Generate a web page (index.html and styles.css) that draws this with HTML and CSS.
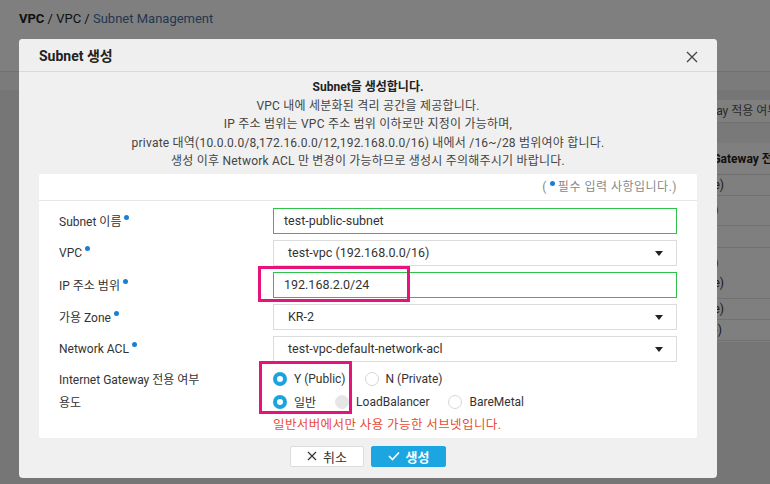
FILE: index.html
```html
<!DOCTYPE html>
<html lang="ko">
<head>
<meta charset="utf-8">
<title>Subnet 생성</title>
<link rel="stylesheet" href="styles.css">
</head>
<body>
<div class="page">
  <header class="topbar">
    <nav class="crumbs"><b>VPC</b> / VPC / <span class="cur">Subnet Management</span></nav>
  </header>
  <div class="tabband"></div>
  <main class="content">
    <div class="panel">
      <div class="filter"><span>Internet Gateway 적용 여부</span></div>
      <div class="band"></div>
      <div class="tbl">
        <div class="th">Internet Gateway 전용 여부</div>
        <div class="td r1">N (Private)</div>
        <div class="td r2">Y (Public)</div>
        <div class="td r3">-</div>
        <div class="td r4"><span>Y (Public)</span><span>N (Private)</span></div>
        <div class="td r5">N (Private)</div>
        <div class="td r6">Y (Public-)</div>
      </div>
    </div>
  </main>
</div>
<div class="overlay"></div>
<div class="modal">
  <div class="modal-head">
    <h1 class="modal-title">Subnet 생성</h1>
    <svg class="close" width="12" height="12" viewBox="0 0 12 12"><path d="M1 1L11 11M11 1L1 11" stroke="#444" stroke-width="1.3" fill="none"/></svg>
  </div>
  <div class="modal-body">
    <div class="desc">
      <p class="strong">Subnet을 생성합니다.</p>
      <p>VPC 내에 세분화된 격리 공간을 제공합니다.</p>
      <p>IP 주소 범위는 VPC 주소 범위 이하로만 지정이 가능하며,</p>
      <p>private 대역(10.0.0.0/8,172.16.0.0/12,192.168.0.0/16) 내에서 /16~/28 범위여야 합니다.</p>
      <p>생성 이후 Network ACL 만 변경이 가능하므로 생성시 주의해주시기 바랍니다.</p>
    </div>
    <div class="card">
      <div class="card-head">(<i class="req"></i>필수 입력 사항입니다.)</div>
      <div class="form">
        <div class="row">
          <div class="label">Subnet 이름<i class="req sup"></i></div>
          <div class="input ok">test-public-subnet</div>
        </div>
        <div class="row">
          <div class="label">VPC<i class="req sup"></i></div>
          <div class="select">test-vpc (192.168.0.0/16)<span class="caret"></span></div>
        </div>
        <div class="row">
          <div class="label">IP 주소 범위<i class="req sup"></i></div>
          <div class="input ok">192.168.2.0/24</div>
        </div>
        <div class="row">
          <div class="label">가용 Zone<i class="req sup"></i></div>
          <div class="select">KR-2<span class="caret"></span></div>
        </div>
        <div class="row">
          <div class="label">Network ACL<i class="req sup"></i></div>
          <div class="select">test-vpc-default-network-acl<span class="caret"></span></div>
        </div>
        <div class="row radio-row">
          <div class="label">Internet Gateway 전용 여부</div>
          <div class="radios">
            <span class="opt"><i class="radio on"></i>Y (Public)</span>
            <span class="opt"><i class="radio"></i>N (Private)</span>
          </div>
        </div>
        <div class="row radio-row">
          <div class="label">용도</div>
          <div class="radios">
            <span class="opt"><i class="radio on"></i>일반</span>
            <span class="opt"><i class="radio disabled"></i>LoadBalancer</span>
            <span class="opt"><i class="radio"></i>BareMetal</span>
          </div>
        </div>
        <div class="row msg-row">
          <div></div>
          <div class="msg">일반서버에서만 사용 가능한 서브넷입니다.</div>
        </div>
      </div>
    </div>
    <div class="actions">
      <button class="btn cancel"><svg width="10" height="10" viewBox="0 0 10 10"><path d="M1 1L9 9M9 1L1 9" stroke="#333" stroke-width="1.2" fill="none"/></svg>취소</button>
      <button class="btn submit"><svg width="12" height="10" viewBox="0 0 12 10"><path d="M1 5L4.5 8.5L11 1.5" stroke="#fff" stroke-width="1.6" fill="none"/></svg>생성</button>
    </div>
  </div>
  <div class="mark mark-ip"></div>
  <div class="mark mark-radio"></div>
</div>
</body>
</html>
```

FILE: styles.css
```css
* { box-sizing: border-box; }
html, body { margin: 0; padding: 0; }
body {
  width: 770px;
  height: 484px;
  overflow: hidden;
  position: relative;
  font-family: Roboto, "Noto Sans CJK KR", sans-serif;
  font-size: 12px;
  color: #333;
  background: #eeeeee;
}
p { margin: 0; }

/* background page */
.page { width: 770px; height: 484px; display: flex; flex-direction: column; }
.topbar { height: 72px; background: #fff; padding: 11px 19px 0; border-bottom: 1px solid #e3e3e3; }
.crumbs { font-size: 13px; line-height: 16px; color: #222; }
.crumbs .cur { color: #46709f; }
.tabband { height: 18px; background: #f6f6f6; }
.content { flex: 1; background: #ececec; padding: 10px 0 0 30px; }
.panel { background: #fff; height: 242px; overflow: hidden; }
.filter { height: 23px; line-height: 23px; padding-left: 608px; color: #555; white-space: nowrap; border-bottom: 1px solid #e2e2e2; }
.band { height: 20px; background: #f3f3f3; }
.tbl { padding-left: 637px; white-space: nowrap; }
.th { height: 32px; line-height: 32px; font-weight: bold; color: #222; border-bottom: 1px solid #ddd; }
.td { line-height: 20px; border-bottom: 1px solid #e2e2e2; color: #333; }
.r2 { line-height: 29px; }
.r3 { line-height: 21px; }
.r4 { display: flex; flex-direction: column; padding: 5px 0; }
.r4 span { line-height: 20px; }

.overlay { position: absolute; inset: 0; background: rgba(0,0,0,0.5); }

/* modal */
.modal {
  position: absolute;
  left: 19px; top: 39px;
  width: 698px; height: 439px;
  background: #f0f0f0;
  border-radius: 4px;
}
.modal-head {
  height: 33px;
  display: flex; align-items: center; justify-content: space-between;
  padding: 0 19px 0 20px;
  border-bottom: 1px solid #dadada;
  background: #efefef;
  border-radius: 4px 4px 0 0;
}
.modal-title { margin: 0; font-size: 14px; font-weight: bold; color: #222; }
.close { margin-top: 3px; }
.modal-body { padding: 6px 20px 0; }
.desc { text-align: center; line-height: 18.6px; color: #444; font-size: 12px; letter-spacing: 0.22px; }
.desc .strong { font-weight: bold; color: #222; letter-spacing: 0; }

.card { margin-top: 3px; background: #fff; height: 264px; border-radius: 2px; }
.card-head {
  height: 27px; line-height: 26px;
  text-align: right; padding-right: 20px;
  color: #888; border-bottom: 1px solid #e6e6e6;
  letter-spacing: 0.5px;
}
.req { display: inline-block; width: 5px; height: 5px; border-radius: 50%; background: #1b7fd0; margin: 0 3px 0 3px; vertical-align: 5px; }
.req.sup { margin-left: 3px; vertical-align: 6px; }

.form { padding: 7px 20px 0; }
.row { display: grid; grid-template-columns: 214px 404px; align-items: center; height: 26px; margin-bottom: 6px; }
.label { color: #333; white-space: nowrap; }
.input, .select {
  height: 26px; line-height: 24px;
  border: 1px solid #dcdcdc;
  padding-left: 10px;
  color: #333;
  font-size: 12.5px;
  background: #fff;
}
.input.ok { border-color: #2fc24b; }
.select { position: relative; padding-left: 14px; }
.caret {
  position: absolute; right: 13px; top: 10px;
  width: 0; height: 0;
  border-left: 4px solid transparent; border-right: 4px solid transparent;
  border-top: 5px solid #222;
}
.row.radio-row { height: 22px; margin-bottom: 1px; }
.radios { display: flex; align-items: center; font-size: 12px; color: #333; }
.opt { display: inline-flex; align-items: center; gap: 7px; margin-right: 19px; white-space: nowrap; }
.radio { display: inline-block; width: 14px; height: 14px; border-radius: 50%; border: 1px solid #d6d6d6; background: #fff; }
.radio.on { border: 4px solid #1ba3e0; }
.radio.disabled { background: #e6e6e6; border-color: #e6e6e6; }
.row.msg-row { height: 20px; margin-top: 2px; }
.msg { color: #ea4a36; font-size: 12.5px; line-height: 20px; letter-spacing: 0.4px; }

.actions { display: flex; justify-content: center; gap: 7px; margin-top: 8px; }
.btn {
  height: 21px; border-radius: 2px;
  display: inline-flex; align-items: center; justify-content: center; gap: 6px;
  font-family: Roboto, "Noto Sans CJK KR", sans-serif;
  font-size: 13px; padding: 0;
}
.btn.cancel { width: 74px; background: #fff; border: 1px solid #dddddd; color: #333; }
.btn.submit { width: 75px; background: #1ba6e2; border: 1px solid #1ba6e2; color: #fff; font-weight: bold; }

.mark { position: absolute; border: 3px solid #e5137b; }
.mark-ip { left: 239px; top: 227px; width: 152px; height: 36px; }
.mark-radio { left: 240px; top: 322px; width: 93px; height: 53px; }
```
